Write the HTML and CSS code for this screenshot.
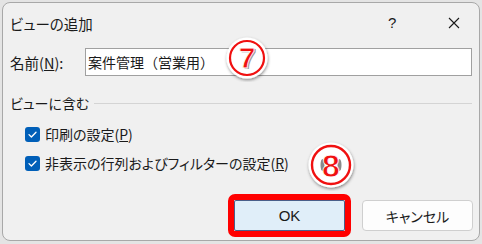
FILE: index.html
```html
<!DOCTYPE html>
<html lang="ja">
<head>
<meta charset="utf-8">
<link rel="stylesheet" href="styles.css">
</head>
<body>
<div class="dialog">
  <div class="titlebar">
    <span class="title">ビューの追加</span>
    <span class="help">?</span>
    <span class="close">
      <svg width="12" height="12" viewBox="0 0 12 12"><path d="M1 1 L11 11 M11 1 L1 11" stroke="#1a1a1a" stroke-width="1.1" fill="none"/></svg>
    </span>
  </div>
  <div class="name-row">
    <label class="name-label">名前(<u>N</u>):</label>
    <div class="input">案件管理（営業用）</div>
  </div>
  <div class="group-head">
    <span class="group-title">ビューに含む</span>
    <span class="group-line"></span>
  </div>
  <div class="check-row first">
    <span class="box"><svg width="15" height="15" viewBox="0 0 15 15"><path d="M4 7.6 L6.4 10 L11 5.2" stroke="#fff" stroke-width="1.3" fill="none" stroke-linecap="round" stroke-linejoin="round"/></svg></span>
    <span class="check-text">印刷の設定(<u>P</u>)</span>
  </div>
  <div class="check-row second">
    <span class="box"><svg width="15" height="15" viewBox="0 0 15 15"><path d="M4 7.6 L6.4 10 L11 5.2" stroke="#fff" stroke-width="1.3" fill="none" stroke-linecap="round" stroke-linejoin="round"/></svg></span>
    <span class="check-text">非表示の行列およびフィルターの設定(<u>R</u>)</span>
  </div>
  <div class="buttons">
    <div class="ok-frame"><div class="btn ok">OK</div></div>
    <div class="btn cancel">キャンセル</div>
  </div>

  <svg class="badge badge7" width="48" height="48" viewBox="0 0 48 48">
    <defs><filter id="sh" x="-30%" y="-30%" width="160%" height="160%"><feDropShadow dx="0.5" dy="1.5" stdDeviation="1.6" flood-color="#000" flood-opacity="0.45"/></filter></defs>
    <circle cx="24" cy="24" r="20.5" fill="#fff" filter="url(#sh)"/>
    <circle cx="24" cy="24" r="17" fill="none" stroke="#f01010" stroke-width="2.2"/>
    <text x="25.5" y="35" font-family="Liberation Sans, sans-serif" font-weight="bold" font-size="30" text-anchor="middle" fill="#9a9a9a">7</text>
    <text x="24" y="34" font-family="Liberation Sans, sans-serif" font-weight="bold" font-size="30" text-anchor="middle" fill="#f01010" stroke="#fff" stroke-width="0.8">7</text>
  </svg>
  <svg class="badge badge8" width="52" height="52" viewBox="0 0 52 52">
    <defs><filter id="sh2" x="-30%" y="-30%" width="160%" height="160%"><feDropShadow dx="0.5" dy="1.5" stdDeviation="1.6" flood-color="#000" flood-opacity="0.45"/></filter></defs>
    <circle cx="26" cy="26" r="22.5" fill="#fff" filter="url(#sh2)"/>
    <circle cx="26" cy="26" r="19" fill="none" stroke="#f01010" stroke-width="2.4"/>
    <ellipse cx="17.5" cy="26" rx="2" ry="6" fill="#8a8a8a"/>
    <ellipse cx="34.5" cy="26" rx="2" ry="6" fill="#8a8a8a"/>
    <text x="26" y="37.5" font-family="Liberation Sans, sans-serif" font-weight="bold" font-size="32" text-anchor="middle" fill="#f01010" stroke="#fff" stroke-width="0.8">8</text>
  </svg>
</div>
</body>
</html>
```
FILE: styles.css
```css
html, body {
  margin: 0;
  padding: 0;
}
body {
  width: 482px;
  height: 244px;
  background: #e4e4e4;
  font-family: "Noto Sans CJK JP", "Noto Sans", sans-serif;
  font-size: 14px;
  color: #1a1a1a;
  overflow: hidden;
}
.dialog {
  position: relative;
  box-sizing: border-box;
  margin: 2px 0 0 2px;
  width: 478px;
  height: 239px;
  background: #f0f0f0;
  border: 1px solid #a8a8a8;
  border-radius: 8px;
  display: flex;
  flex-direction: column;
  font-feature-settings: "palt";
}
.titlebar {
  height: 39px;
  display: flex;
  align-items: center;
  padding-left: 7px;
  flex-shrink: 0;
}
.title {
  flex: 1;
  font-size: 14.5px;
  padding-top: 1px;
}
.help {
  width: 14px;
  font-family: "Liberation Sans", sans-serif;
  font-size: 15px;
  margin-right: 46px;
}
.close {
  width: 12px;
  height: 12px;
  display: flex;
  margin-right: 19px;
}
.name-row {
  margin-top: 6px;
  height: 28px;
  display: flex;
  align-items: center;
  padding-left: 7px;
}
.name-label {
  width: 75px;
  flex-shrink: 0;
  font-size: 14.5px;
}
.input {
  box-sizing: border-box;
  width: 387px;
  height: 28px;
  background: #fff;
  border: 1px solid #a0a0a0;
  padding-left: 2px;
  display: flex;
  align-items: center;
  font-size: 14px;
  font-feature-settings: normal;
}
.group-head {
  margin-top: 17px;
  height: 20px;
  display: flex;
  align-items: center;
  padding-left: 7px;
  padding-right: 7px;
}
.group-title {
  margin-right: 5px;
}
.group-line {
  flex: 1;
  height: 1px;
  background: #d4d4d4;
}
.check-row {
  height: 22px;
  display: flex;
  align-items: center;
  padding-left: 22px;
}
.check-row.first { margin-top: 10px; }
.check-row.second { margin-top: 7px; }
.box {
  width: 15px;
  height: 15px;
  border-radius: 3px;
  background: #005fb8;
  display: flex;
  margin-right: 5px;
}
.buttons {
  margin-top: 20px;
  display: flex;
  align-items: center;
  padding-left: 225px;
}
.ok-frame {
  box-sizing: border-box;
  width: 123px;
  height: 43px;
  border: 6px solid #ff0000;
  border-radius: 7px;
  display: flex;
}
.btn {
  box-sizing: border-box;
  display: flex;
  align-items: center;
  justify-content: center;
  font-size: 14px;
}
.ok {
  width: 111px;
  height: 31px;
  background: #e0eef9;
  border: 1px solid #4a5f8a;
  border-radius: 2px;
  font-family: "Liberation Sans", "Noto Sans CJK JP", sans-serif;
  font-size: 15px;
}
.cancel {
  width: 111px;
  height: 31px;
  margin-left: 11px;
  background: #fdfdfd;
  border: 1px solid #cfcfcf;
  border-radius: 4px;
}
.badge {
  position: absolute;
}
.badge7 { left: 220px; top: 31px; }
.badge8 { left: 302px; top: 136px; }
```
